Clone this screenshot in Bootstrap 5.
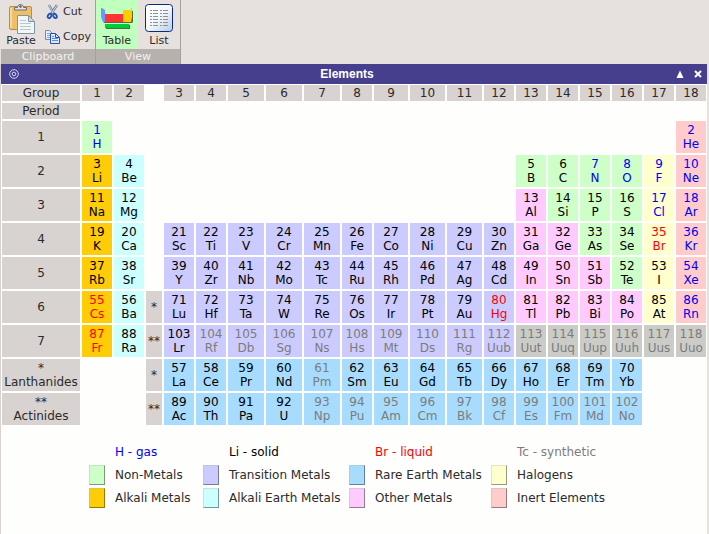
<!DOCTYPE html>
<html lang="en">
<head>
<meta charset="utf-8">
<meta name="viewport" content="width=device-width, initial-scale=1">
<title>Elements</title>
<link href="https://cdn.jsdelivr.net/npm/bootstrap@5.3.0/dist/css/bootstrap.min.css" rel="stylesheet">
<style>
body { font-family: "DejaVu Sans", sans-serif; font-size: 12px; line-height: 14px; color: #2b2b2b; background: #e6e0de; }
.ribbon { padding-left: 1px; }
.ribbon-group { border-right: 1px solid #a59f9c; }
.ribbon-body { height: 49px; font-size: 11px; }
.ribbon-caption { background: #b7b1ae; color: #f4f2f1; font-size: 11px; line-height: 15px; }
.tool { border: 0; background: none; color: #2b2b2b; padding: 0 0 1px; line-height: 14px; }
.tool-paste { width: 40px; }
.tool-small { gap: 3px; }
.tool-view { width: 42px; }
.tool-view.active { background: #c0ffbd; }
.tool svg { display: block; flex: none; }
.titlebar { background: #453f8e; color: #fff; height: 20px; font-family: "Liberation Sans", sans-serif; font-size: 12px; font-weight: bold; }
.titlebar button { border: 0; background: none; color: #fff; padding: 0; display: block; }
.pane { background: #fefefc; border-left: 1px solid #d8d2d0; margin-right: 2px; }
.ptable { table-layout: fixed; width: 100%; border-collapse: separate; border-spacing: 0; text-align: center; }
.ptable td, .ptable th { height: 34px; padding: 0; border: 1px solid transparent; background-clip: padding-box; font-weight: normal; vertical-align: middle; white-space: nowrap; }
.ptable .short-row th, .ptable .short-row td { height: 18px; }
.hd { background-color: #d8d2d0; color: #2b2b2b; }
.nonmetal { background-color: #ceffc8; }
.alkali { background-color: #ffcc08; }
.earth { background-color: #ccffff; }
.transition-metal { background-color: #cccbff; }
.rare { background-color: #a7dcff; }
.other-metal { background-color: #ffcbff; }
.halogen { background-color: #ffffce; }
.inert { background-color: #ffcbcb; }
.unknown { background-color: #cbccc8; }
.solid { color: #000; }
.gas { color: #0000f5; }
.liquid { color: #ff0000; }
.synthetic { color: #7c7c7c; }
.legend-grid { display: grid; grid-template-columns: 114fr 146fr 142fr 216fr; grid-auto-rows: 23px; align-items: center; padding: 14px 0 0 88px; }
.key { display: flex; align-items: center; gap: 10px; white-space: nowrap; }
.swatch { width: 16px; height: 20px; border: 1px solid; border-color: rgba(160,190,160,.35) rgba(0,0,0,.4) rgba(0,0,0,.4) rgba(160,190,160,.35); }
.swatch-none { width: 16px; }
</style>
<script src="https://cdn.jsdelivr.net/npm/bootstrap@5.3.0/dist/js/bootstrap.bundle.min.js"></script>
</head>
<body class="min-vh-100 d-flex flex-column">
<header class="ribbon d-flex">
  <section class="ribbon-group" aria-label="Clipboard">
    <div class="ribbon-body d-flex pe-1 gap-1">
      <button class="tool tool-paste d-flex flex-column align-items-center justify-content-end" type="button">
        <svg width="28" height="32" viewBox="0 0 28 32" aria-hidden="true">
          <rect x="2.500" y="4.500" width="22" height="23" rx="1.500" fill="#efbf68" stroke="#b98d45"/>
          <path d="M4 6v20" stroke="#f8d898" stroke-width="2"/>
          <path d="M7.500 8V5.500h3c0-4 6-4 6 0h3V8z" fill="#dfe3e6" stroke="#686e72"/>
          <circle cx="13.500" cy="4.500" r="1.200" fill="#55595c"/>
          <path d="M10.500 13.500h11l6 6v12h-17z" fill="#f1f6f8" stroke="#8294a0"/>
          <path d="M21.500 13.500v6h6z" fill="#cbd9e0" stroke="#8294a0"/>
          <path d="M13 18.500h6M13 21.500h11M13 24.500h11M13 27.500h11" stroke="#b8c5cc"/>
        </svg>
        <span>Paste</span>
      </button>
      <div class="d-flex flex-column justify-content-between py-1">
        <button class="tool tool-small d-flex align-items-center" type="button">
          <svg width="15" height="16" viewBox="0 0 15 16" aria-hidden="true">
            <path d="M4 1l5 9M12 1L6 10" stroke="#6c7f9f" stroke-width="2.400"/>
            <path d="M4 1l4 8M12 1L7 9" stroke="#d3dde8" stroke-width=".9"/>
            <ellipse cx="4.500" cy="12" rx="1.600" ry="2.300" transform="rotate(30 4.500 12)" fill="none" stroke="#2452b4" stroke-width="1.800"/>
            <ellipse cx="10" cy="12" rx="1.600" ry="2.300" transform="rotate(-30 10 12)" fill="none" stroke="#2452b4" stroke-width="1.800"/>
          </svg>
          Cut
        </button>
        <button class="tool tool-small d-flex align-items-center" type="button">
          <svg width="15" height="15" viewBox="0 0 15 15" aria-hidden="true">
            <path d="M.5 1.500h4l3 3v6h-7z" fill="#e4efff" stroke="#7288ba"/>
            <path d="M2 4.500h3M2 6.500h4M2 8.500h4" stroke="#7fa3e4"/>
            <path d="M5.500 4.500h5l4 4v6h-9z" fill="#dceaff" stroke="#2c50ae"/>
            <path d="M10.500 4.500v4h4" fill="none" stroke="#2c50ae"/>
            <path d="M7 7.500h2M7 9.500h6M7 11.500h6" stroke="#5e8ce0"/>
          </svg>
          Copy
        </button>
      </div>
    </div>
    <div class="ribbon-caption text-center">Clipboard</div>
  </section>
  <section class="ribbon-group" aria-label="View">
    <div class="ribbon-body d-flex">
      <button class="tool tool-view active d-flex flex-column align-items-center justify-content-end" type="button" aria-pressed="true">
        <svg width="34" height="34" viewBox="0 0 34 34" aria-hidden="true">
          <path d="M2 9l4 6h17V11h10v11l-1 1H4l-2-5z" fill="#59645a"/>
          <path d="M1 8h1l3 2v12H3L1 17z" fill="#6699ff"/>
          <path d="M5 14h18v8H5z" fill="#ff3333"/>
          <path d="M23 10h8V8h1v9l-1 5h-8z" fill="#ffcc00"/>
          <path d="M6 25h24v4H6z" fill="#59645a"/>
          <path d="M5 24h24v4H5z" fill="#00cc33"/>
        </svg>
        <span>Table</span>
      </button>
      <button class="tool tool-view d-flex flex-column align-items-center justify-content-end" type="button" aria-pressed="false">
        <svg width="28" height="30" viewBox="0 0 28 30" aria-hidden="true">
          <defs><linearGradient id="sheet" x2="1" y2="1"><stop stop-color="#fff"/><stop offset=".5" stop-color="#f3f7fa"/><stop offset="1" stop-color="#b7cddd"/></linearGradient></defs>
          <rect x=".5" y=".5" width="27" height="27" rx="3" fill="url(#sheet)" stroke="#0a2b80"/>
          <path d="M5 6.500h2M5 9.500h2M5 12.500h2M5 15.500h2M5 18.500h2M5 21.500h2M8 6.500h5M8 9.500h5M8 12.500h5M8 15.500h5M8 18.500h5M8 21.500h5M15 6.500h2M15 9.500h2M15 12.500h2M15 15.500h2M15 18.500h2M15 21.500h2M18 6.500h5M18 9.500h5M18 12.500h5M18 15.500h5M18 18.500h5M18 21.500h5" stroke="#8b9297"/>
        </svg>
        <span>List</span>
      </button>
    </div>
    <div class="ribbon-caption text-center">View</div>
  </section>
</header>
<main class="pane flex-grow-1">
  <div class="titlebar d-flex align-items-center">
    <svg class="d-block ms-2" width="10" height="10" viewBox="0 0 10 10" fill="none" stroke="#d5d3ee" aria-hidden="true"><circle cx="5" cy="5" r="4.300"/><circle cx="5" cy="5" r="1.800"/></svg>
    <div class="flex-grow-1 text-center">Elements</div>
    <div class="d-flex align-items-center gap-2 pe-1">
      <button type="button" aria-label="Collapse"><svg class="d-block" width="10" height="10" viewBox="0 0 10 10" aria-hidden="true"><path d="M5 1.500L8.500 9h-7z" fill="#fff"/></svg></button>
      <button type="button" aria-label="Close"><svg class="d-block" width="10" height="10" viewBox="0 0 10 10" aria-hidden="true"><path d="M2 2l6 6M8 2L2 8" stroke="#fff" stroke-width="2"/></svg></button>
    </div>
  </div>
  <table class="ptable" id="ptable">
    <colgroup id="cols"></colgroup>
    <tbody id="rows"></tbody>
  </table>
  <div class="legend-grid">
    <div class="key gas"><span class="swatch-none"></span>H - gas</div>
    <div class="key solid"><span class="swatch-none"></span>Li - solid</div>
    <div class="key liquid"><span class="swatch-none"></span>Br - liquid</div>
    <div class="key synthetic"><span class="swatch-none"></span>Tc - synthetic</div>
    <div class="key"><span class="swatch nonmetal"></span>Non-Metals</div>
    <div class="key"><span class="swatch transition-metal"></span>Transition Metals</div>
    <div class="key"><span class="swatch rare"></span>Rare Earth Metals</div>
    <div class="key"><span class="swatch halogen"></span>Halogens</div>
    <div class="key"><span class="swatch alkali"></span>Alkali Metals</div>
    <div class="key"><span class="swatch earth"></span>Alkali Earth Metals</div>
    <div class="key"><span class="swatch other-metal"></span>Other Metals</div>
    <div class="key"><span class="swatch inert"></span>Inert Elements</div>
  </div>
</main>
<script>
const kinds = { n: 'nonmetal', k: 'alkali', e: 'earth', t: 'transition-metal', r: 'rare', o: 'other-metal', h: 'halogen', i: 'inert', u: 'unknown' };
const gas = [1, 2, 7, 8, 9, 10, 17, 18, 36, 54, 86];
const liquid = [35, 55, 80, 87];
const isSynthetic = n => n === 61 || (n >= 93 && n !== 103);
// Each period: heading, marker column, then cells as number, symbol and kind letter; "-" is an empty cell.
const periods = [
  ['1', '', '1Hn -', '- - - - - - - - - - - - - - - 2Hei'],
  ['2', '', '3Lik 4Bee', '- - - - - - - - - - 5Bn 6Cn 7Nn 8On 9Fh 10Nei'],
  ['3', '', '11Nak 12Mge', '- - - - - - - - - - 13Alo 14Sin 15Pn 16Sn 17Clh 18Ari'],
  ['4', '', '19Kk 20Cae', '21Sct 22Tit 23Vt 24Crt 25Mnt 26Fet 27Cot 28Nit 29Cut 30Znt 31Gao 32Geo 33Asn 34Sen 35Brh 36Kri'],
  ['5', '', '37Rbk 38Sre', '39Yt 40Zrt 41Nbt 42Mot 43Tct 44Rut 45Rht 46Pdt 47Agt 48Cdt 49Ino 50Sno 51Sbo 52Ten 53Ih 54Xei'],
  ['6', '*', '55Csk 56Bae', '71Lut 72Hft 73Tat 74Wt 75Ret 76Ost 77Irt 78Ptt 79Aut 80Hgt 81Tlo 82Pbo 83Bio 84Poo 85Ath 86Rni'],
  ['7', '**', '87Frk 88Rae', '103Lrt 104Rft 105Dbt 106Sgt 107Nst 108Hst 109Mtt 110Dst 111Rgt 112Uubt 113Uutu 114Uuqu 115Uupu 116Uuhu 117Uusu 118Uuou'],
  ['*<br>Lanthanides', '*', '- -', '57Lar 58Cer 59Prr 60Ndr 61Pmr 62Smr 63Eur 64Gdr 65Tbr 66Dyr 67Hor 68Err 69Tmr 70Ybr - -'],
  ['**<br>Actinides', '**', '- -', '89Acr 90Thr 91Par 92Ur 93Npr 94Pur 95Amr 96Cmr 97Bkr 98Cfr 99Esr 100Fmr 101Mdr 102Nor - -']
];
const cell = code => {
  if (code === '-') return '<td></td>';
  const [, num, sym, kind] = code.match(/^(\d+)([A-Z][a-z]*)([a-z])$/);
  const n = +num;
  const state = gas.includes(n) ? 'gas' : liquid.includes(n) ? 'liquid' : isSynthetic(n) ? 'synthetic' : 'solid';
  return `<td class="${kinds[kind]} ${state}">${n}<br>${sym}</td>`;
};
const cells = list => list.split(' ').map(cell).join('');
const colWidths = [80, 32, 32, 18, 32, 32, 38, 38, 38, 32, 36, 37, 37, 32, 32, 32, 32, 32, 32, 32];
document.getElementById('cols').innerHTML = colWidths.map(w => `<col style="width:${w}px">`).join('');
let html = '<tr class="short-row"><th class="hd">Group</th>';
for (let g = 1; g <= 18; g++) html += (g === 3 ? '<td></td>' : '') + `<th class="hd" scope="col">${g}</th>`;
html += '</tr><tr class="short-row"><th class="hd">Period</th><td colspan="19"></td></tr>';
for (const [head, mark, left, right] of periods) {
  html += `<tr><th class="hd" scope="row">${head}</th>${cells(left)}<td${mark ? ' class="hd"' : ''}>${mark}</td>${cells(right)}</tr>`;
}
document.getElementById('rows').innerHTML = html;
</script>
</body>
</html>
